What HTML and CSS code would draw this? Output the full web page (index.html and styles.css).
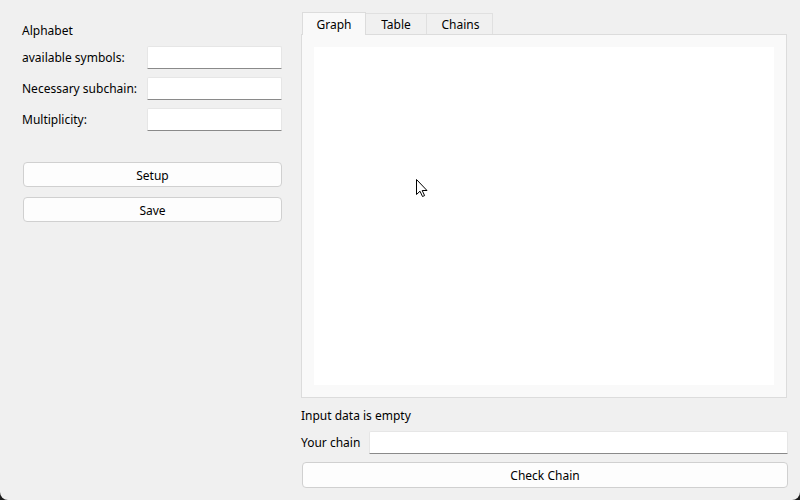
FILE: index.html
```html
<!DOCTYPE html>
<html>
<head>
<meta charset="utf-8">
<link rel="stylesheet" href="styles.css">
</head>
<body>
<div class="window">
  <div class="left">
    <div class="title">Alphabet</div>
    <div class="form">
      <span class="lbl">available symbols:</span><div class="field"></div>
      <span class="lbl">Necessary subchain:</span><div class="field"></div>
      <span class="lbl">Multiplicity:</span><div class="field"></div>
    </div>
    <div class="buttons">
      <div class="btn">Setup</div>
      <div class="btn">Save</div>
    </div>
  </div>
  <div class="right">
    <div class="tabs">
      <div class="tab active">Graph</div>
      <div class="tab tab-table">Table</div>
      <div class="tab tab-chains">Chains</div>
    </div>
    <div class="pane"><div class="canvas"></div></div>
    <div class="status">Input data is empty</div>
    <div class="chainrow">
      <span class="lbl">Your chain</span>
      <div class="field wide"></div>
    </div>
    <div class="btn check">Check Chain</div>
  </div>
  <svg class="cursor" width="14" height="20" viewBox="0 0 14 20">
    <path d="M0.5 0.5 L0.5 15.5 L4 12.2 L6.5 17.5 L8.6 16.6 L6.2 11.5 L11 11.5 Z" fill="#fff" stroke="#000" stroke-width="1" stroke-linejoin="miter"/>
  </svg>
</div>
</body>
</html>
```
FILE: styles.css
```css
html { background: #1c1c1c; }
body { margin: 0; }
.window {
  position: relative;
  width: 800px;
  height: 500px;
  background: #f0f0f0;
  border-radius: 0 0 8px 8px;
  display: flex;
  font-family: "Segoe UI", "Noto Sans", sans-serif;
  font-size: 12px;
  color: #000;
  overflow: hidden;
}
.left {
  width: 260px;
  margin-left: 22px;
  display: flex;
  flex-direction: column;
}
.title {
  margin-top: 23px;
  line-height: 16px;
  height: 16px;
  margin-bottom: 7px;
}
.form {
  display: grid;
  grid-template-columns: 125px 135px;
  grid-auto-rows: 23px;
  row-gap: 8px;
  align-items: center;
}
.lbl { padding-top: 0; }
.field {
  box-sizing: border-box;
  height: 23px;
  background: #fff;
  border: 1px solid #e6e6e6;
  border-bottom: 1px solid #8a8a8a;
  border-radius: 2px 2px 0 0;
}
.buttons {
  margin-top: 31px;
  margin-left: 1px;
  display: flex;
  flex-direction: column;
  gap: 10px;
}
.btn {
  box-sizing: border-box;
  height: 25px;
  padding-top: 2px;
  border: 1px solid #d0d0d0;
  border-radius: 4px;
  background: #fdfdfd;
  display: flex;
  align-items: center;
  justify-content: center;
}
.right {
  width: 487px;
  margin-left: 19px;
  padding-top: 12px;
  display: flex;
  flex-direction: column;
}
.tabs {
  display: flex;
  height: 22px;
  padding-left: 1px;
  position: relative;
  z-index: 1;
}
.tab {
  box-sizing: border-box;
  margin-top: 1px;
  height: 21px;
  padding-top: 1px;
  border: 1px solid #e0e0e0;
  border-bottom: none;
  background: #f0f0f0;
  display: flex;
  align-items: center;
  justify-content: center;
}
.tab.active {
  margin-top: 0;
  height: 23px;
  width: 64px;
  padding-top: 0;
  background: #f9f9f9;
  border-color: #dcdcdc;
}
.tab-table { width: 61px; border-left: none; }
.tab-chains { width: 67px; border-left: 1px solid #e0e0e0; margin-left: -1px; padding-left: 2px; }
.pane {
  box-sizing: border-box;
  width: 486px;
  height: 364px;
  background: #f9f9f9;
  border: 1px solid #dcdcdc;
  padding: 12px;
}
.canvas {
  width: 100%;
  height: 100%;
  background: #fff;
}
.status {
  margin-top: 10px;
  line-height: 16px;
  height: 16px;
  margin-bottom: -1px;
}
.chainrow {
  margin-top: 8px;
  display: flex;
  align-items: center;
}
.chainrow .lbl { width: 68px; }
.field.wide { width: 419px; height: 23px; }
.btn.check {
  margin-top: 8px;
  margin-left: 1px;
  width: 486px;
  height: 26px;
  padding-top: 1px;
}
.cursor {
  position: absolute;
  left: 416px;
  top: 179px;
}
```
